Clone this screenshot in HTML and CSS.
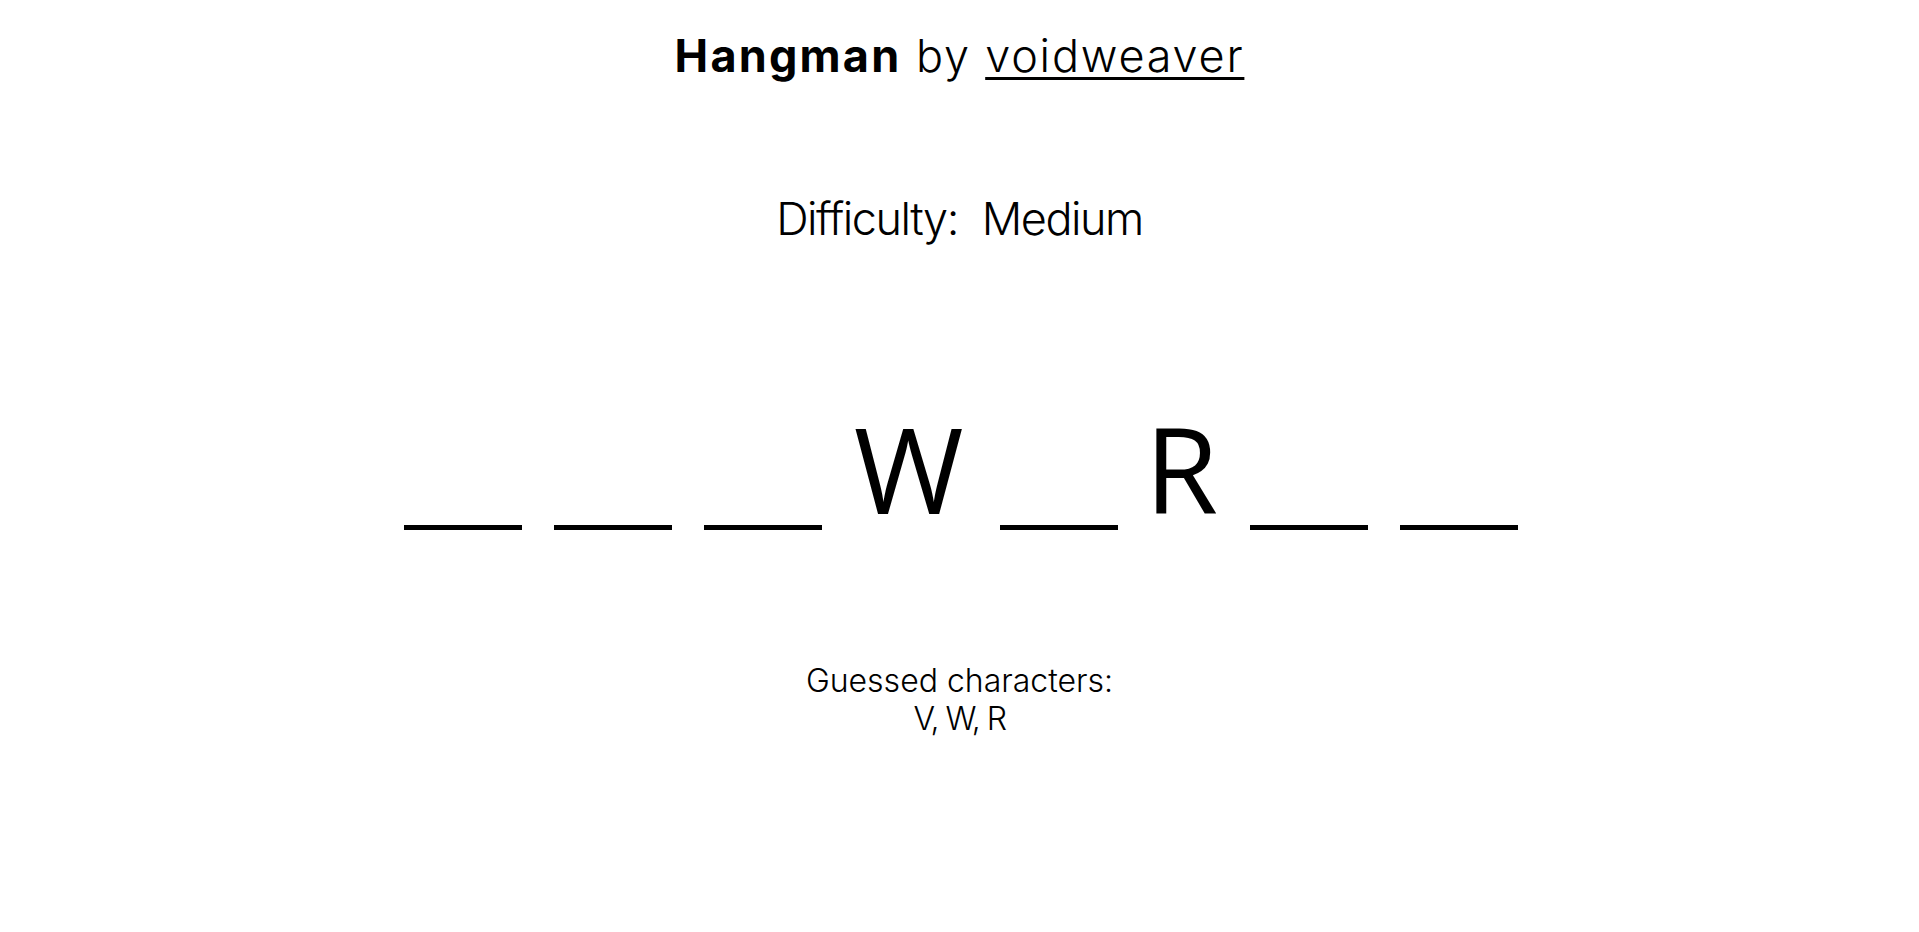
FILE: index.html
```html
<!DOCTYPE html>
<html lang="en">
<head>
<meta charset="utf-8">
<title>Hangman</title>
<link rel="stylesheet" href="styles.css">
</head>
<body>
<main class="game">
  <h1 class="title"><strong>Hangman</strong> by <a class="author" href="#">voidweaver</a></h1>
  <p class="difficulty"><span>Difficulty:</span><span>Medium</span></p>
  <div class="word">
    <span class="blank">_</span>
    <span class="blank">_</span>
    <span class="blank">_</span>
    <span class="letter letter-w">W</span>
    <span class="blank">_</span>
    <span class="letter letter-r">R</span>
    <span class="blank">_</span>
    <span class="blank">_</span>
  </div>
  <div class="guessed">
    <div>Guessed characters:</div>
    <div class="guessed-list">V, W, R</div>
  </div>
</main>
</body>
</html>
```
FILE: styles.css
```css
html, body {
  margin: 0;
  padding: 0;
  background: #fff;
  color: #000;
}
body {
  font-family: Inter, "Noto Sans", sans-serif;
}
.game {
  display: flex;
  flex-direction: column;
  align-items: center;
  padding-top: 26px;
}
.title {
  margin: 0;
  font-size: 45px;
  line-height: 60px;
  font-weight: 300;
  letter-spacing: 1.8px;
}
.title strong {
  font-weight: 700;
  letter-spacing: 2.2px;
}
.author {
  color: #000;
  text-decoration: underline;
  text-decoration-thickness: 3px;
  text-underline-offset: 5px;
}
.difficulty {
  margin: 103px 0 0;
  font-size: 45px;
  line-height: 60px;
  font-weight: 300;
  letter-spacing: -1.5px;
  display: flex;
  gap: 24px;
}
.word {
  margin-top: 144px;
  margin-left: 3px;
  display: flex;
  align-items: flex-start;
  gap: 32px;
  height: 150px;
}
.letter {
  font-family: "Open Sans", sans-serif;
  font-size: 119px;
  line-height: 150px;
  font-weight: 400;
}
.letter-w {
  margin-right: 4px;
}
.letter-r {
  margin-left: -5px;
}
.blank {
  display: block;
  width: 118px;
  height: 132px;
  border-bottom: 5px solid #000;
  color: transparent;
  overflow: hidden;
  font-size: 20px;
}
.guessed {
  margin-top: 119px;
  font-size: 32px;
  line-height: 38px;
  font-weight: 300;
  text-align: center;
}
.guessed-list {
  letter-spacing: -1.5px;
}
```
